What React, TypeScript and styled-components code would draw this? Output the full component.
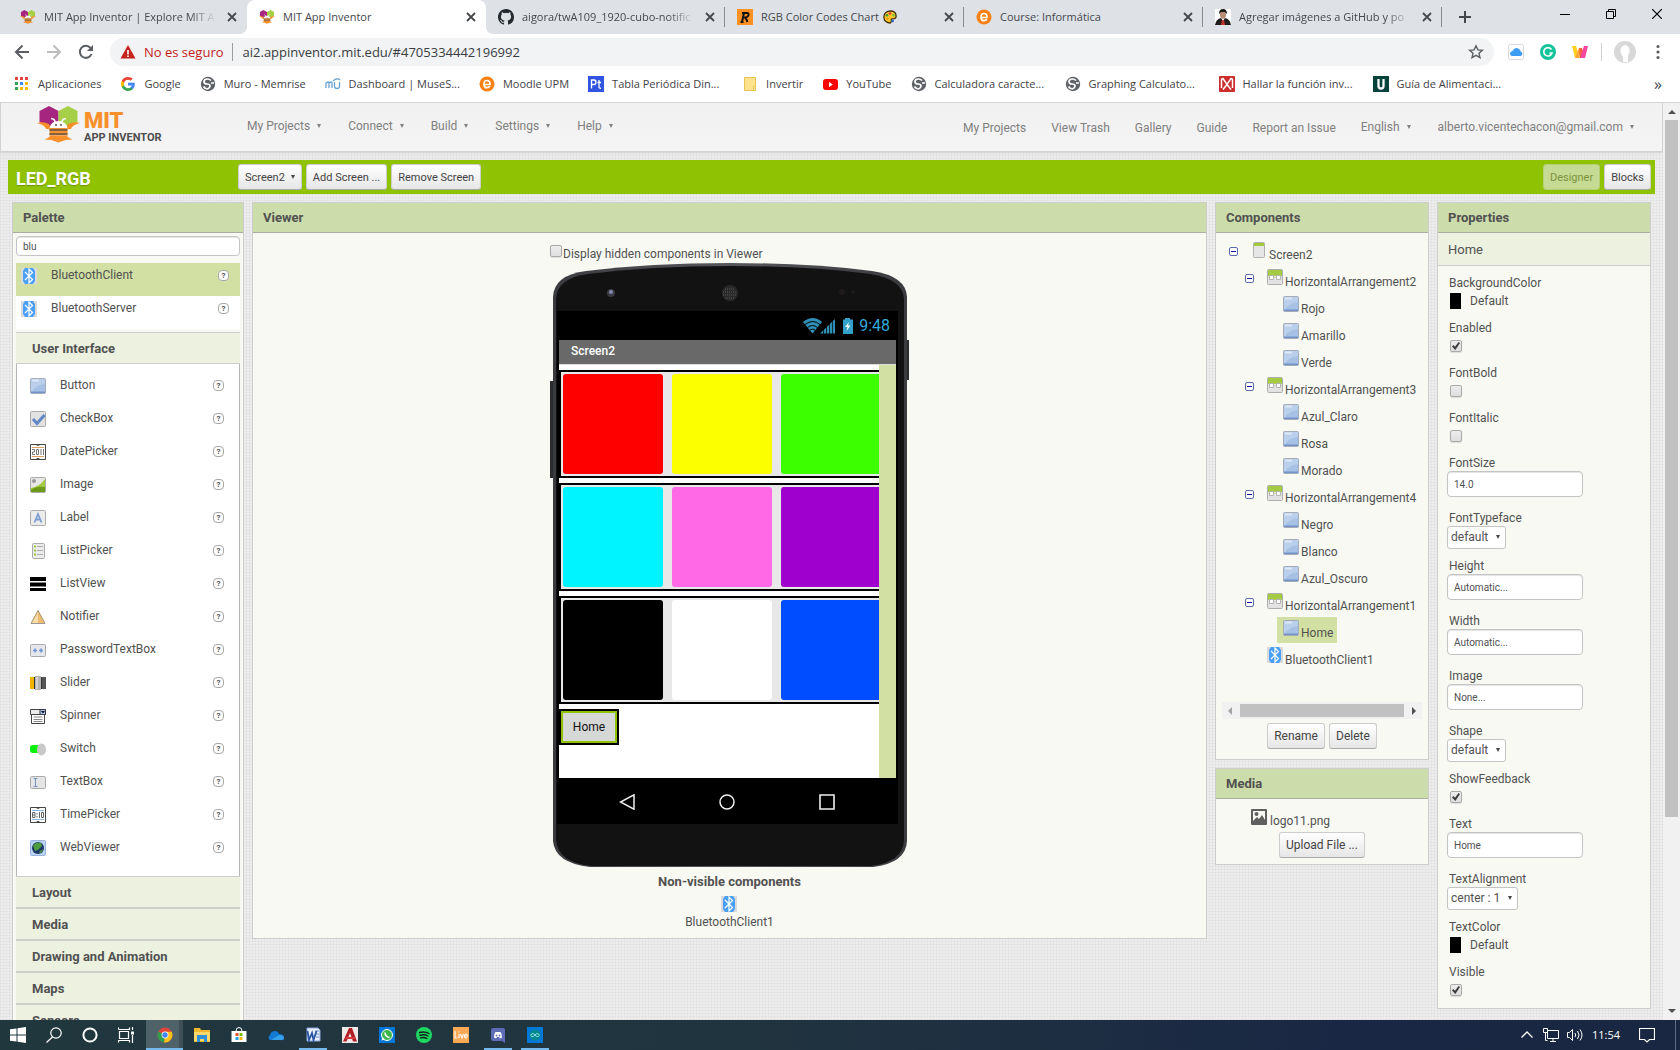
import React from "react";
import styled, { createGlobalStyle, css } from "styled-components";

const Global = createGlobalStyle`
  *, *::before, *::after { box-sizing: border-box; }
  body { margin: 0; font-family: Roboto, "Liberation Sans", sans-serif; font-size: 12px; color: #515151; overflow: hidden; }
  button, input, select { font-family: inherit; font-size: inherit; color: inherit; margin: 0; }
  a { color: inherit; text-decoration: none; }
  ul { list-style: none; margin: 0; padding: 0; }
  h1, h2, h3 { margin: 0; }
  svg { display: block; flex: none; }
`;

const uiFont = `"Open Sans", "Noto Sans", sans-serif`;
const line = "#cdcdcd";

/* ---------- icons ---------- */

const Svg = ({ w = 16, h = 16, box, children }: { w?: number; h?: number; box?: string; children: React.ReactNode }) => (
  <svg width={w} height={h} viewBox={box || `0 0 ${w} ${h}`} aria-hidden="true">{children}</svg>
);

const Bee = () => (
  <>
    <path d="M12 0l9.500 5v11l-9.500 5-9.500-5V5z" fill="#a5257f" />
    <path d="M31 0l9.500 5v11L31 21l-9.500-5V5z" fill="#a5cf47" />
    <path d="M0 17q6-2 12 1l2 5H9Q8 19 0 17zM43 17q-6-2-12 1l-2 5h5q1-4 9-6z" fill="#f7902a" />
    <path d="M12.500 22.500q1-7.500 9-7.500t9 7.500z" fill="#fff" />
    <path d="M18 16q0-3-4-3.500M25 16q0-3 4-3.500" stroke="#fff" strokeWidth="1.600" fill="none" />
    <circle cx="19" cy="19" r=".9" fill="#444" /><circle cx="24" cy="19" r=".9" fill="#444" />
    <path d="M12.500 22h18v7.500h-18z" fill="#f7902a" />
    <path d="M12.500 24h18M12.500 28h18" stroke="#5a5351" strokeWidth="1.600" />
    <path d="M12.500 29.500h18v1.500l5 2.500-7 .5-7 2.500-7-2.500-7-.5 5-2.500z" fill="#f7902a" />
  </>
);

const icons: Record<string, React.ReactNode> = {
  mit: <Svg box="0 -2 43 41"><Bee /></Svg>,
  github: <Svg><path fill="#24292e" d="M8 0C3.580 0 0 3.580 0 8c0 3.540 2.290 6.530 5.470 7.590.4.070.55-.17.55-.38v-1.490c-2.010.37-2.530-.49-2.690-.94-.09-.23-.48-.94-.82-1.130-.28-.15-.68-.52-.01-.53.63-.01 1.080.58 1.230.82.72 1.210 1.870.87 2.330.66.07-.52.28-.87.51-1.070-1.780-.2-3.640-.89-3.640-3.950 0-.87.31-1.590.82-2.150-.08-.2-.36-1.020.08-2.120 0 0 .67-.21 2.200.82a7.600 7.600 0 0 1 4 0c1.530-1.040 2.200-.82 2.200-.82.44 1.100.16 1.920.08 2.120.51.56.82 1.270.82 2.150 0 3.070-1.870 3.750-3.650 3.950.29.25.54.73.54 1.480v2.200c0 .21.15.46.55.38A8 8 0 0 0 16 8c0-4.420-3.580-8-8-8z" /></Svg>,
  rgb: <Svg><path fill="#ff9124" d="M0 0h16v16H0z" /><path d="M5 13L7 4h3q2 0 1.500 2T9 8.500H6.500M8.500 8.500L10.500 13M3.500 13h3M5 4h4" fill="none" stroke="#111" strokeWidth="2" /></Svg>,
  moodle: <Svg><circle cx="8" cy="8" r="7.500" fill="#f98012" /><path d="M5 8.500h6q.2-4-3-4t-3 3.700q0 3.500 3 3.500 2 0 2.800-1.500" fill="none" stroke="#fff" strokeWidth="1.700" /></Svg>,
  person: <Svg><path fill="#fff" d="M0 0h16v16H0z" /><path d="M5 3q3-4 6 0v4l-1 2-2 1-2-1-1-2z" fill="#b98d72" /><path d="M4 5q0-5 4-5t4 5l-2-2H6z" fill="#191919" /><path d="M0 16q1-6 6-7l2 3 2-3q5 1 6 7z" fill="#211c1c" /><path d="M7 11h2l1 5H6z" fill="#c2352f" /></Svg>,
  palette: <Svg w={14} h={14} box="0 0 16 16"><path d="M8 1q7 0 7 6 0 3-4 3-2 0-1.500 2T8 15Q1 14 1 8t7-7z" fill="#ffc32b" stroke="#3a2a05" strokeWidth="1.400" /><circle cx="4.500" cy="6" r="1.500" fill="#3aa13c" /><circle cx="8" cy="4" r="1.500" fill="#d33" /><circle cx="12" cy="6" r="1.500" fill="#7c3" /><circle cx="5" cy="10" r="1.500" fill="#e8a000" /><circle cx="11" cy="12.500" r="1.600" fill="#36c" /></Svg>,
  apps: <Svg>{["#e8423f", "#e8423f", "#e8423f", "#36a35b", "#4086f4", "#f7b90a", "#36a35b", "#f7b90a", "#f7b90a"].map((c, i) => <path key={i} fill={c} d={`M${1 + (i % 3) * 5} ${1 + Math.floor(i / 3) * 5}h3v3h-3z`} />)}</Svg>,
  google: <Svg w={14} h={14} box="0 0 48 48"><path fill="#4285f4" d="M47 24.500c0-1.600-.2-3.200-.4-4.500H24v9h13c-.6 3-2.300 5.400-4.800 7v6h7.700c4.500-4 7.100-10.200 7.100-17.500z" /><path fill="#34a853" d="M24 48c6.500 0 12-2.100 15.900-5.900l-7.700-6c-2.200 1.500-4.900 2.300-8.200 2.300-6.300 0-11.600-4.200-13.500-10H2.600v6.200C6.500 42.600 14.600 48 24 48z" /><path fill="#fbbc05" d="M10.500 28.500a14.500 14.500 0 0 1 0-9.100v-6.200H2.600a24 24 0 0 0 0 21.500z" /><path fill="#ea4335" d="M24 9.500c3.500 0 6.700 1.200 9.200 3.600L40 6.200C36 2.400 30.500 0 24 0 14.600 0 6.500 5.400 2.600 13.200l7.900 6.200c1.900-5.700 7.200-9.900 13.500-9.900z" /></Svg>,
  globe: <Svg><circle cx="8" cy="8" r="7.200" fill="#5f6368" /><path d="M7.500 3Q4 3 4 5.500t3 2.500 3 2-2.500 3M7.500 3q2 0 3.500 1.500M7.500 13Q5 13 3.500 10.500M11 7h3" fill="none" stroke="#fff" strokeWidth="1.700" /></Svg>,
  muse: <Svg><path d="M1 12V7q3-2 3 0v5V7q3-2 3 0v5M9.500 6v4q0 2.500 2.500 2.500t2.500-2.500V6M8 5q4-4 7-1" fill="none" stroke="#6aa3cf" strokeWidth="1.300" /></Svg>,
  pt: <Svg><path d="M0 0h16v16H0z" fill="#3155e0" /><path d="M3.500 12.500V4h2.500q2 0 2 2.200T6 8.500H4M11 4v7q0 1.500 2 1.200M9.500 6.500h3.500" stroke="#fff" strokeWidth="1.300" fill="none" /></Svg>,
  folder: <Svg><path d="M2.500 1.500h11v13h-11z" fill="#ffe38c" stroke="#e9c44f" /><path d="M11.500 10.500h2v4h-2z" fill="#fff0b8" stroke="#e9c44f" /></Svg>,
  youtube: <Svg><rect x="1" y="3" width="15" height="11" rx="3" fill="#f00" /><path d="M7 6l4 2.500L7 11z" fill="#fff" /></Svg>,
  hallar: <Svg><rect width="16" height="16" rx="1" fill="#cc2e2e" /><path d="M2.500 12V4q0-1.500 1.500-1.500l4 6 4-6q1.500 0 1.500 1.500v8M4 13.500l4-5 4 5" fill="none" stroke="#fff" strokeWidth="1.500" /></Svg>,
  uned: <Svg><path d="M0 0h16v16H0z" fill="#04423a" /><path d="M5.500 3v7q0 2.500 2.500 2.500t2.500-2.500V3" fill="none" stroke="#fff" strokeWidth="2.300" /></Svg>,
  bluetooth: <Svg><path d="M0 0h16v16H0z" fill="#dbdbdb" /><path d="M4 0h8l2 3v10l-2 3H4l-2-3V3z" fill="#4aa0f8" /><path d="M4 4l7.500 7.500L8 15V1l3.500 3.500L4 12" fill="none" stroke="#fff" strokeWidth="1.200" /></Svg>,
  button: <Svg><rect x=".5" y=".5" width="15" height="15" rx="1" fill="#a7c1e4" stroke="#a5acb8" /><path d="M1 1h14v5Q5 7 2 14H1z" fill="#b9cfeb" /><path d="M2 1.500h7v2H2z" fill="#dce8f7" /><path d="M1 13.500h14v1.500H1z" fill="#7292cb" /></Svg>,
  checkbox: <Svg><rect x=".5" y=".5" width="15" height="15" rx="1" fill="#e2e2e2" stroke="#aaa" /><path d="M3 8l4 4.500L14.500 4" fill="none" stroke="#5f86c5" strokeWidth="3" /></Svg>,
  date: <Svg><path d="M.5.5h15v15H.5z" fill="#fff" stroke="#444" /><path d="M2 3.500h12M2 12.500h12" stroke="#e0a064" /><path d="M2 5.500h2.500V8H2.500v2.500h2.500M6.500 5.500h2v5h-2zM11 5v6M13.500 5v6" fill="none" stroke="#777" /><path d="M6 2h4L8 1zM6 14h4l-2 1.500z" fill="#444" /></Svg>,
  image: <Svg><rect x=".5" y=".5" width="15" height="15" rx="1" fill="#e8e8e8" stroke="#aaa" /><path d="M1 11q8-1 14-9v13H1z" fill="#a3cc3f" /><path d="M1 13q5-4 14-3v5H1z" fill="#6d9a17" /><circle cx="4" cy="4" r="2" fill="#999" /></Svg>,
  label: <Svg><rect x=".5" y=".5" width="15" height="15" rx="1" fill="#ececec" stroke="#aaa" /><path d="M4.500 12.500L8 4l3.500 8.500M5.500 9.500h5" fill="none" stroke="#7f9fd2" strokeWidth="1.800" /></Svg>,
  list: <Svg><rect x="2.500" y=".5" width="12" height="15" rx="1" fill="#ececec" stroke="#aaa" /><path d="M7 3.500h6M7 7.500h6M7 11.500h6" stroke="#aaa" /><path d="M4 3.500h2M4 7.500h2M4 11.500h2" stroke="#9cc63c" strokeWidth="2" /></Svg>,
  listview: <Svg><path d="M0 1h16v4H0zM0 6.500h16v4H0zM0 12h16v3H0z" fill="#000" /></Svg>,
  notifier: <Svg><path d="M8 1.500L15 14.500H1z" fill="#f0bd6e" stroke="#a89274" /><path d="M8 3v11H2z" fill="#f8dba8" /><path d="M1 14.500h14" stroke="#999" /></Svg>,
  password: <Svg><rect x=".5" y="2.500" width="15" height="12" rx="1" fill="#e5e7ea" stroke="#aaa" /><path d="M3 8.500h4M5 6.500v4M9 8.500h4M11 6.500v4" stroke="#7196d4" strokeWidth="1.600" /></Svg>,
  slider: <Svg><path d="M0 2h5v12H0z" fill="#f3b200" /><path d="M11 2h5v12h-5z" fill="#555" /><path d="M5 1h6v14H5z" fill="#b4b4b4" /><path d="M4.500 2v12M11.500 2v12" stroke="#333" /><path d="M7 2v12" stroke="#ddd" strokeWidth="1.500" /></Svg>,
  spinner: <Svg><path d="M.5 1.500h15v5H.5z" fill="#ececec" stroke="#444" /><path d="M10 1.500h5.500v5H10z" fill="#a9c4f4" stroke="#334" /><path d="M11 3h4l-2 2.500z" fill="#111" /><path d="M1.500 6.500h13v9h-13z" fill="#fff" stroke="#444" /><path d="M3.500 9h9M3.500 11.500h9M3.500 13.500h9" stroke="#888" /></Svg>,
  switch: <Svg><rect x="0" y="4" width="13" height="8" rx="3" fill="#0af00e" /><ellipse cx="11.500" cy="8.500" rx="4.500" ry="6" fill="#c8c8c8" /></Svg>,
  textbox: <Svg><rect x=".5" y="2.500" width="15" height="12" rx="1" fill="#e5e5e5" stroke="#aaa" /><path d="M3.500 4.500h4M3.500 12.500h4M5.500 4.500v8" stroke="#7891bb" /></Svg>,
  time: <Svg><path d="M.5.5h15v15H.5z" fill="#fff" stroke="#444" /><path d="M2 3.500h12M2 12.500h12" stroke="#8bb6e0" /><path d="M2.500 5.500h2.500v5H2.500zM2.500 8h2.500M7 6v1.500M7 9v1.500M9.500 5v6M11.500 5.500h2v5h-2z" fill="none" stroke="#666" /><path d="M6 2h4L8 1zM6 14h4l-2 1.500z" fill="#444" /></Svg>,
  web: <Svg><rect x=".5" y=".5" width="15" height="15" rx="1" fill="#bcd3f0" stroke="#98b5e0" /><circle cx="8" cy="8" r="6" fill="#1c3768" /><path d="M3 6q3-5 8-3l1 3-4 4-3 1z" fill="#4f9c3d" /><path d="M9 12l4-3-1 3-2 1z" fill="#4f9c3d" /></Svg>,
  screen: <Svg><rect x="2.500" y=".5" width="11" height="15" rx="1" fill="#e6e6e6" stroke="#b0b0b0" /><path d="M3 1h10v3H3z" fill="#a4c93a" /></Svg>,
  arrangement: <Svg><rect x=".5" y=".5" width="15" height="15" rx="1" fill="#e2e2e2" stroke="#aeaeae" /><path d="M1 1h14v6H1z" fill="#a4cb42" /><path d="M2.500 6.500h4v4h-4zM9.500 6.500h4v4h-4z" fill="#fff" stroke="#b4b4b4" /></Svg>,
  picture: <Svg><rect width="16" height="16" rx="1" fill="#5f5f5f" /><path d="M2 2h12v9l-3-5-3 4-2-2-4 4z" fill="#f8f9f3" /><circle cx="5.500" cy="5" r="2" fill="#5f5f5f" /></Svg>,
  back: <Svg><path d="M15 8H2M8.500 1.500L2 8l6.500 6.500" fill="none" stroke="#5a5d61" strokeWidth="2" /></Svg>,
  forward: <Svg><path d="M1 8h13M7.500 1.500L14 8l-6.500 6.500" fill="none" stroke="#bcbdbf" strokeWidth="2" /></Svg>,
  reload: <Svg><path d="M13.500 10a6 6 0 1 1-1-6" fill="none" stroke="#5a5d61" strokeWidth="2" /><path d="M15 1v6H9z" fill="#5a5d61" /></Svg>,
  warning: <Svg><path d="M8 1l7.500 13.500H.5z" fill="#c5221f" /><path d="M8 6v4.500M8 11.500v1.500" stroke="#fff" strokeWidth="1.600" /></Svg>,
  star: <Svg><path d="M8 1.800l1.900 4.100 4.400.4-3.300 3 1 4.400L8 11.400l-4 2.300 1-4.400-3.300-3 4.400-.4z" fill="none" stroke="#5a5d61" strokeWidth="1.400" /></Svg>,
  cloud: <Svg><rect x=".5" y=".5" width="15" height="15" rx="2" fill="#fff" stroke="#d5dae0" /><path d="M4 12q-3-1-1.500-4 1.500-1 2-1Q7 2 11 5q2 1 1.500 2.500Q16 9 13 12z" fill="#3d9df6" /></Svg>,
  grammarly: <Svg><circle cx="8" cy="8" r="8" fill="#15c39a" /><path d="M11.500 5.500A4.200 4.200 0 1 0 12 9H9.500" fill="none" stroke="#fff" strokeWidth="1.600" /></Svg>,
  wallapop: <Svg><path d="M0 2h4l4 12H3z" fill="#ffcf24" /><path d="M7 4h3L7 14H3z" fill="#ffa53a" /><path d="M7 4h3l3 10H8z" fill="#f9613f" /><path d="M12 2h4l-3 12H8z" fill="#f4479d" /></Svg>,
  avatar: <Svg w={22} h={22}><circle cx="11" cy="11" r="11" fill="#d8d8d8" /><ellipse cx="11" cy="10" rx="4.500" ry="6" fill="#fff" /><path d="M9 14h5v7H9z" fill="#fff" /></Svg>,
  dots: <Svg><path d="M8 2.500v0M8 8v0M8 13.500v0" stroke="#5a5d61" strokeWidth="3.200" strokeLinecap="round" /></Svg>,
  close: <Svg><path d="M4 4l8 8M12 4l-8 8" stroke="#45484b" strokeWidth="1.800" /></Svg>,
  plus: <Svg><path d="M8 2v12M2 8h12" stroke="#45484b" strokeWidth="2" /></Svg>,
  min: <Svg w={10} h={10}><path d="M0 5.500h10" stroke="#000" /></Svg>,
  restore: <Svg w={10} h={10}><path d="M.5 2.500h7v7h-7zM2.500 2.500v-2h7v7h-2" fill="none" stroke="#000" /></Svg>,
  winclose: <Svg w={10} h={10}><path d="M0 0l10 10M10 0L0 10" stroke="#000" strokeWidth="1.200" /></Svg>,
  windows: <Svg><path d="M0 2.300L6.500 1.400v6.100H0zM7.500 1.200L16 0v7.500H7.500zM0 8.500h6.500v6.100L0 13.700zM7.500 8.500H16V16l-8.500-1.200z" fill="#fff" /></Svg>,
  search: <Svg><circle cx="10" cy="6" r="5.200" fill="none" stroke="#fff" strokeWidth="1.200" /><path d="M6.500 10L.5 15.500" stroke="#fff" strokeWidth="1.200" /></Svg>,
  cortana: <Svg><circle cx="8" cy="8" r="6.600" fill="none" stroke="#fff" strokeWidth="2" /></Svg>,
  taskview: <Svg><path d="M1.500 4.500h9v7h-9zM.5 2.500v-2M.5 2.500h11v-2M.5 15.500v-2h11v2M14.500 0v3M14.500 8v8" fill="none" stroke="#fff" strokeWidth="1.200" /><path d="M13 4.500h3v3h-3z" fill="#fff" /></Svg>,
  chrome: <Svg><circle cx="8" cy="8" r="7.500" fill="#e0443a" /><path d="M8 8L1.300 4.500A7.500 7.500 0 0 0 7.500 15.500z" fill="#2f9e4e" /><path d="M8 8l-.8 7.500A7.500 7.500 0 0 0 14.700 4.800H8z" fill="#fbc116" /><circle cx="8" cy="8" r="3.400" fill="#fff" /><circle cx="8" cy="8" r="2.700" fill="#4285f4" /></Svg>,
  explorer: <Svg><path d="M0 1h6l1 2h9v12H0z" fill="#f1b82d" /><path d="M0 5h16v9H0z" fill="#ffd869" /><path d="M3 8h10v7h-3v-3H6v3H3z" fill="#2f8fd8" /></Svg>,
  store: <Svg><path d="M.5 4h15v11H.5z" fill="#fff" /><path d="M5 4q0-3.500 3-3.500T11 4" fill="none" stroke="#fff" /><path d="M4.500 6h3v3h-3z" fill="#e5502c" /><path d="M8.500 6h3v3h-3z" fill="#7cb813" /><path d="M4.500 10h3v3h-3z" fill="#20a1e8" /><path d="M8.500 10h3v3h-3z" fill="#fbb813" /></Svg>,
  onedrive: <Svg><path d="M2 13q-3-2 0-5 1-4 5-4 3 0 4 3 5 0 5 3.500T13 13z" fill="#1479d0" /><path d="M3 13l8-5q5 0 5 2.500T13 13z" fill="#35a1ea" /></Svg>,
  word: <Svg><path d="M2 1h11l2 2v11H2z" fill="#e8effa" stroke="#8ba7d8" /><path d="M10 4h4M11 7h3M11 10h3" stroke="#6d8fce" /><path d="M2.500 4l1.500 9L7 6l1.500 7 3-9" fill="none" stroke="#2c56a4" strokeWidth="1.800" /></Svg>,
  autocad: <Svg><path d="M0 0h16v16H0z" fill="#f1e9e8" /><path d="M1 14.500L7 1h3l5 13.500h-4L8 6l-3.500 8.500z" fill="#b11f26" /><path d="M4 10h9l1 2H3z" fill="#d5383a" /></Svg>,
  whatsapp: <Svg><path d="M0 0h16v16H0z" fill="#0078d7" /><circle cx="8" cy="8" r="5.500" fill="#3db54a" stroke="#fff" /><path d="M2.500 13.500l1-3.500 2.500 2.500z" fill="#fff" /><path d="M6 5.500q0 4 4.500 5" fill="none" stroke="#fff" strokeWidth="1.600" /></Svg>,
  spotify: <Svg><circle cx="8" cy="8" r="8" fill="#1ed760" /><path d="M3.500 5.500q5-1.500 9.500 1M4 8.200q4.500-1.200 8 .8M4.500 10.800q3.500-1 6.500.7" fill="none" stroke="#121f18" strokeWidth="1.400" strokeLinecap="round" /></Svg>,
  live: <Svg><path d="M0 0h16v16H0z" fill="#fda855" /><path d="M2 4v7h2.500M6 7v4M6 4.500v1M7.500 7L9 11l1.500-4M11.500 9h3q0-2-1.500-2t-1.500 2 1.500 2h1" fill="none" stroke="#fff" strokeWidth="1.100" /></Svg>,
  discord: <Svg><path d="M3 1h10q2 0 2 2v13l-3-2H3q-2 0-2-2V3q0-2 2-2z" fill="#5d6cb5" /><path d="M4 10.500q0-4 1.500-5.500h5Q12 6.500 12 10.500L10 11.500 9 10H7l-1 1.500z" fill="#fff" /><circle cx="6.500" cy="8.500" r=".9" fill="#5d6cb5" /><circle cx="9.500" cy="8.500" r=".9" fill="#5d6cb5" /></Svg>,
  arduino: <Svg><path d="M0 0h16v16H0z" fill="#0078d7" /><circle cx="8" cy="8" r="5.500" fill="#04878f" /><path d="M8 8q-2-2.500-3.500-1t0 2.500T8 8q2-2.500 3.500-1t0 2.500T8 8" fill="none" stroke="#8fe0e0" /></Svg>,
  chevron: <Svg><path d="M2.500 10.500L8 5l5.500 5.500" fill="none" stroke="#fff" strokeWidth="1.300" /></Svg>,
  network: <Svg><path d="M4.500 3.500h11v8h-11zM10 11.500v3M7 14.500h6M.5 1.500h4v4h-4zM2.500 5.500v8h2" fill="none" stroke="#fff" /></Svg>,
  speaker: <Svg><path d="M.5 5.500h2l3-3v11l-3-3h-2z" fill="none" stroke="#fff" /><path d="M8 6q1.500 2 0 4M10.500 4q3 4 0 8M13 2.500q4 5.500 0 11" fill="none" stroke="#fff" /></Svg>,
  note: <Svg><path d="M.5 1.500h15v11h-5L8 15l-2.500-2.500h-5z" fill="none" stroke="#fff" strokeWidth="1.200" /></Svg>,
};

/* ---------- browser chrome ---------- */

const Shell = styled.div`display: flex; flex-direction: column; height: 100vh; background: #fff;`;

const TabStrip = styled.div`
  flex: none; display: flex; height: 34px; padding-left: 8px; background: #dee1e6;
  font: 11px/16px ${uiFont}; color: #45484c;
`;
const Tab = styled.div<{ $active?: boolean; $sep?: boolean }>`
  flex: 0 1 239px; min-width: 0; display: flex; align-items: center; gap: 8px; padding: 0 7px 0 12px; position: relative;
  ${p => p.$active && css`
    background: #fff; border-radius: 8px 8px 0 0;
    &::before, &::after { content: ""; position: absolute; bottom: 0; width: 8px; height: 8px; }
    &::before { left: -8px; background: radial-gradient(circle at 0 0, transparent 8px, #fff 8px); }
    &::after { right: -8px; background: radial-gradient(circle at 100% 0, transparent 8px, #fff 8px); }
  `}
  ${p => p.$sep && css`background: linear-gradient(#888b90, #888b90) right center / 1px 20px no-repeat;`}
`;
const TabTitle = styled.span<{ $fade?: boolean }>`
  flex: 1; min-width: 0; display: flex; align-items: center; gap: 4px; white-space: nowrap;
  ${p => p.$fade && css`mask-image: linear-gradient(90deg, #000 85%, transparent);`}
`;
const IconButton = styled.button`
  border: 0; padding: 0; background: none; display: flex; align-items: center; justify-content: center;
`;
const NewTab = styled(IconButton)`width: 45px;`;
const WindowButtons = styled.div`margin-left: auto; display: flex; height: 28px;`;
const WindowButton = styled(IconButton)`width: 46px;`;

const Toolbar = styled.div`
  flex: none; display: flex; align-items: center; height: 36px; padding: 0 14px; gap: 16px;
  font: 13px/18px ${uiFont};
`;
const Omnibox = styled.div`
  flex: 1; display: flex; align-items: center; height: 28px; margin-right: -2px; padding: 0 10px;
  border-radius: 14px; background: #f1f3f4; gap: 8px;
`;
const Insecure = styled.span`color: #c5221f; padding-right: 8px; margin-right: 2px; border-right: 1px solid #9a9da1;`;
const Url = styled.input`
  flex: 1; border: 0; padding: 0; background: none; outline: 0; color: #3a3d41;
`;
const AvatarButton = styled(IconButton)`
  height: 18px; border-left: 1px solid #cfd1d4; padding-left: 12px; margin: 0 -2px 0 -3px;
`;

const Bookmarks = styled.nav`
  flex: none; display: flex; align-items: center; height: 33px; padding: 0 14px 4px; gap: 19px;
  border-bottom: 1px solid #d3d4d6; font: 11px/16px ${uiFont}; color: #3f4246; white-space: nowrap;
`;
const Bookmark = styled.a<{ $long: boolean }>`
  display: flex; align-items: center; gap: 8px; min-width: ${p => (p.$long ? "135px" : "0")};
`;
const BookmarkIcon = styled.span`width: 16px; display: flex; justify-content: center;`;
const More = styled(IconButton)`margin-left: auto; width: 16px; font-size: 16px; color: #45484c;`;

/* ---------- page ---------- */

const Page = styled.div`
  flex: 1; min-height: 0; display: flex; overflow: hidden;
`;
const Content = styled.div`
  flex: 1; min-width: 0; overflow: hidden;
  background-color: #ededed;
  background-image:
    repeating-linear-gradient(0deg, rgba(0,0,0,.03) 0 1px, transparent 1px 3px),
    repeating-linear-gradient(90deg, rgba(0,0,0,.03) 0 1px, transparent 1px 3px);
`;
const Header = styled.header`
  display: flex; align-items: center; height: 49px; padding: 0 26px 0 36px;
  background: linear-gradient(#f1f1f1, #f4f4f4); border: solid #d2d2d2; border-width: 0 1px 1px; color: #808080;
  box-shadow: 0 1px 2px #d5d5d5;
`;
const Brand = styled.a`display: flex; align-items: flex-start; width: 210px; height: 42px; gap: 4px;`;
const BrandText = styled.span`display: flex; flex-direction: column; font-weight: 700; color: #4d4d4d; font-size: 11px; line-height: 12px; padding-top: 4px;`;
const BrandName = styled.span`color: #f7902a; font-size: 22px; font-weight: 900; line-height: 22px;`;
const Menu = styled.nav<{ $right?: boolean }>`
  display: flex; align-items: center; gap: ${p => (p.$right ? 25 : 27)}px; line-height: 16px; padding-top: ${p => (p.$right ? 1 : 0)}px;
  margin-left: ${p => (p.$right ? "auto" : "0")};
`;
const MenuButton = styled.button`
  border: 0; padding: 0 0 2px; background: none; display: flex; align-items: center; gap: 7px;
  ${Menu} a ~ & { padding-right: 2px; }
`;
const Caret = styled.span`border: 2px solid transparent; border-top: 4px solid currentColor; border-bottom: 0;`;

const ProjectBar = styled.div`
  display: flex; align-items: center; height: 34px; margin: 8px 8px 0; padding: 0 4px 0 8px; gap: 4px; background: #8fc202;
`;
const ProjectName = styled.h1`
  width: 218px; font-size: 18px; line-height: 24px; padding-top: 4px; color: #fff; text-shadow: 0 1px 1px #6d9500;
`;
const Btn = styled.button<{ $small?: boolean }>`
  display: flex; align-items: center; gap: 6px; height: 26px; padding: 0 6px; white-space: nowrap;
  font-size: ${p => (p.$small ? 11 : 12)}px;
  border: 1px solid #ccc; border-bottom-color: #aaa; border-radius: 3px; color: #444;
  background: linear-gradient(#fff, #e6e6e6);
  &:disabled { background: #c5da93; border-color: #b3cf70; color: #7c9440; }
`;
const Spacer = styled.span`flex: 1;`;

const Workspace = styled.main`
  display: grid; grid-template-columns: 232px minmax(0, 1fr) 214px 214px; gap: 8px; align-items: start; padding: 8px 12px;
`;
const Column = styled.div`display: flex; flex-direction: column; gap: 8px;`;
const Panel = styled.section`border: 1px solid ${line}; background: #f8f9f3;`;
const PanelTitle = styled.h2`
  height: 30px; padding: 0 10px; border-bottom: 1px solid #aaaea2; background: #ccdcaa;
  font-size: 13px; line-height: 29px;
`;

/* palette */
const PaletteBody = styled.div`padding: 3px;`;
const TextField = styled.input<{ $h?: number }>`
  display: block; width: 100%; height: ${p => p.$h || 26}px; padding: 0 6px; font-size: 10px;
  border: 1px solid #c4c4c4; border-radius: 4px; background: #fff; box-shadow: inset 0 1px 1px #e4e4e4; outline: 0;
`;
const Results = styled.ul`margin: 7px 0 3px; background: #fff;`;
const Entry = styled.li<{ $selected?: boolean; $pad: number; $end: number }>`
  display: flex; align-items: flex-start; height: 33px; padding: 5px ${p => p.$end}px 0 ${p => p.$pad}px;
  background: ${p => (p.$selected ? "#d2e0a3" : "#fff")};
`;
const EntryName = styled.span`flex: 1; padding-left: 14px; line-height: 14px;`;
const Help = styled.button`
  width: 11px; height: 11px; margin-top: 2px; padding: 0; border: 1px solid #a8a8a8; border-radius: 4px; background: #fff;
  font-size: 8px; font-weight: 700; line-height: 9px; text-align: center;
`;
const Category = styled.button`
  display: block; width: 100%; height: 32px; padding: 2px 16px 0; text-align: left; font-size: 13px; font-weight: 700;
  line-height: 28px; border: solid ${line}; border-width: 1px 0; background: #edf1e0;
`;
const CategoryItems = styled.ul`border: solid #b4b4b4; border-width: 0 1px; padding: 9px 0 8px; background: #fff;`;

/* viewer */
const Stage = styled.div`display: flex; flex-direction: column; align-items: center; padding: 12px 0 8px;`;
const HiddenRow = styled.label`display: flex; align-items: flex-start; gap: 1px; width: 359px; height: 18px; line-height: 18px;`;
const Check = styled.input.attrs({ type: "checkbox" })`
  appearance: none; flex: none; width: 12px; height: 12px; border: 1px solid #a9a9a9; border-radius: 2px;
  background: linear-gradient(#ededed, #dedede); box-shadow: 0 1px 1px #ddd;
  &:checked::after {
    content: ""; display: block; width: 8px; height: 8px; margin: 1px; background: #3c3c3c;
    clip-path: polygon(0 55%, 18% 38%, 38% 58%, 82% 0, 100% 14%, 42% 100%);
  }
`;
const Phone = styled.div`position: relative; width: 359px; padding: 48px 11px 43px 7px;`;
const Case = styled.div`position: absolute; inset: 0; z-index: 0;`;
const Display = styled.div`position: relative; background: #000; padding: 0 2px;`;
const StatusBar = styled.div`
  display: flex; align-items: center; justify-content: flex-end; height: 29px; padding-right: 6px; gap: 6px;
  color: #33a9d9; font-size: 16px; line-height: 20px;
`;
const ScreenTitle = styled.div`
  height: 25px; padding: 0 12px; border-bottom: 1px solid #ddd; background: #696969; color: #fff; font-weight: 500; line-height: 22px;
`;
const ScreenBody = styled.div`display: flex; height: 413px; background: #d2e0a3;`;
const Canvas = styled.div`width: 320px; overflow: hidden; padding-top: 5px; background: #fff; display: flex; flex-direction: column; gap: 5px; align-items: flex-start;`;
const Arrangement = styled.div`
  flex: none; display: flex; gap: 9px; width: 334px; border: 2px solid #000; padding: 2px; background: #e8e8e8;
`;
const Swatch = styled.button<{ $c: string }>`
  flex: none; width: 100px; height: 100px; padding: 0; border: 0; border-radius: 3px; background: ${p => p.$c};
`;
const HomeButton = styled.button`
  height: 36px; width: 60px; padding: 0; border: 2px solid #000; background: #d6d7d7; color: #111;
  box-shadow: inset 0 0 0 2px #8fc202;
`;
const NavBar = styled.div`
  display: flex; justify-content: space-between; align-items: center; height: 46px; padding: 2px 61px 0 60px;
`;
const NonVisible = styled.div`display: flex; flex-direction: column; align-items: center; line-height: 16px; padding-top: 7px; gap: 2px;`;
const NonVisibleTitle = styled.h3`font-size: 13px; line-height: 16px; margin-bottom: 4px;`;

/* components tree */
const Tree = styled.ul`padding: 5px 0 0; height: 469px; overflow: hidden;`;
const Node = styled.li<{ $level: number; $leaf?: boolean }>`
  display: flex; align-items: center; height: 27px; padding-left: ${p => (p.$leaf ? 45 : [13, 29, 61][p.$level])}px;
`;
const Toggle = styled.button`
  width: 9px; height: 9px; margin-right: 7px; padding: 0; border: 1px solid #5a6cae; border-radius: 2px; background: #fff;
  &::after { content: ""; display: block; width: 5px; height: 1px; margin: 0 1px; background: #1010b0; }
`;
const NodeLabel = styled.span<{ $selected?: boolean }>`
  display: flex; align-items: flex-start; gap: 2px; height: 26px; padding: 3px 4px 0 6px; white-space: nowrap;
  background: ${p => (p.$selected ? "#d2e0a3" : "none")};
`;
const NodeText = styled.span`line-height: 16px; padding-top: 5px;`;
const HScroll = styled.div`
  display: flex; align-items: center; justify-content: space-between; height: 17px; margin: 0 6px; padding: 0 6px; background: #f1f1f1;
`;
const HThumb = styled.span`width: 164px; height: 13px; background: #c1c1c1;`;
const Tri = styled.span<{ $dir: "left" | "right" | "up" | "down"; $c?: string }>`
  border: 4px solid transparent;
  ${p => p.$dir === "left" && css`border-right-color: ${p.$c || "#505050"}; border-left: 0;`}
  ${p => p.$dir === "right" && css`border-left-color: ${p.$c || "#505050"}; border-right: 0;`}
  ${p => p.$dir === "up" && css`border-bottom-color: #505050; border-top: 0;`}
  ${p => p.$dir === "down" && css`border-top-color: #505050; border-bottom: 0;`}
`;
const Actions = styled.div`display: flex; justify-content: center; gap: 4px; padding: 4px 0 10px;`;
const MediaBody = styled.div`padding: 10px 0 6px;`;
const MediaItem = styled.a`display: flex; gap: 3px; padding-left: 35px; height: 23px;`;
const MediaName = styled.span`line-height: 16px; padding-top: 4px;`;
const MediaActions = styled.div`display: flex; justify-content: center;`;

/* properties */
const Selected = styled.div`height: 33px; padding: 0 10px; border-bottom: 1px solid ${line}; background: #edf1e0; font-size: 13px; line-height: 34px;`;
const Props = styled.div`padding: 8px 9px 0;`;
const Prop = styled.div<{ $h: number }>`height: ${p => p.$h}px;`;
const PropLabel = styled.label`display: block; padding: 1px 0 0 2px; line-height: 16px; height: 17px;`;
const PropCheck = styled.div`padding: 4px 3px;`;
const PropField = styled.div`width: 136px;`;
const SelectWrap = styled.span`
  position: relative; display: inline-block;
  &::after { content: ""; position: absolute; right: 6px; top: 9px; border: 2px solid transparent; border-top: 4px solid #444; border-bottom: 0; pointer-events: none; }
`;
const Select = styled.select`
  appearance: none; display: block; height: 23px; padding: 0 16px 2px 3px; border: 1px solid #c4c4c4; border-radius: 3px; background: #fff; outline: 0;
`;
const ColorButton = styled.button`
  display: flex; align-items: flex-start; gap: 9px; padding: 2px 3px 0; border: 0; background: none; line-height: 16px;
`;
const ColorChip = styled.span`width: 11px; height: 16px; background: #000;`;

const VScroll = styled.div`
  flex: none; width: 17px; display: flex; flex-direction: column; align-items: center; justify-content: space-between;
  padding: 7px 0; background: #f1f1f1;
`;
const VTrack = styled.div`flex: 1; width: 13px; padding: 6px 0 7px;`;
const VThumb = styled.div`height: 79%; background: #c1c1c1;`;

/* taskbar */
const Taskbar = styled.footer`
  flex: none; display: flex; height: 30px; background: linear-gradient(90deg, #21373e, #20343f 45%, #1a2744 80%, #1a2742); color: #fff;
`;
const Tasks = styled.div`display: flex; padding-left: 2px;`;
const Task = styled.button<{ $open?: boolean; $active?: boolean; $sys?: boolean }>`
  width: ${p => (p.$sys ? 36 : 37)}px; padding: 0; border: 0; display: flex; align-items: center; justify-content: center;
  background:
    ${p => (p.$active ? "linear-gradient(#76b9ed, #76b9ed) center bottom / 100% 2px no-repeat," : "")}
    ${p => (p.$open ? "linear-gradient(#76b9ed, #76b9ed) center bottom / 28px 2px no-repeat," : "")}
    ${p => (p.$active ? "linear-gradient(90deg, #4f6269 33px, #3f4f55 33px)" : "none")};
`;
const Tray = styled.div`
  margin-left: auto; display: flex; align-items: center; gap: 8px; padding-right: 4px; font: 12px/16px ${uiFont};
`;
const Clock = styled.time`padding: 0 11px 0 1px; font-size: 11px;`;
const Peek = styled.span`width: 1px; height: 30px; margin-left: 12px; background: #5d6c80;`;

const tabs = [
  { icon: "mit", title: "MIT App Inventor | Explore MIT A", fade: true },
  { icon: "mit", title: "MIT App Inventor", active: true },
  { icon: "github", title: "aigora/twA109_1920-cubo-notific", fade: true, sep: true },
  { icon: "rgb", title: "RGB Color Codes Chart", after: "palette", sep: true },
  { icon: "moodle", title: "Course: Informática", sep: true },
  { icon: "person", title: "Agregar imágenes a GitHub y po", fade: true, sep: true },
];

const bookmarks = [
  ["apps", "Aplicaciones"], ["google", "Google"], ["globe", "Muro - Memrise"], ["muse", "Dashboard | MuseS..."],
  ["moodle", "Moodle UPM"], ["pt", "Tabla Periódica Din..."], ["folder", "Invertir"], ["youtube", "YouTube"],
  ["globe", "Calculadora caracte..."], ["globe", "Graphing Calculato..."], ["hallar", "Hallar la función inv..."], ["uned", "Guía de Alimentaci..."],
];

const palette = [
  ["button", "Button"], ["checkbox", "CheckBox"], ["date", "DatePicker"], ["image", "Image"], ["label", "Label"],
  ["list", "ListPicker"], ["listview", "ListView"], ["notifier", "Notifier"], ["password", "PasswordTextBox"], ["slider", "Slider"],
  ["spinner", "Spinner"], ["switch", "Switch"], ["textbox", "TextBox"], ["time", "TimePicker"], ["web", "WebViewer"],
];

const tree: [number, string, string][] = [
  [0, "screen", "Screen2"],
  [1, "arrangement", "HorizontalArrangement2"], [2, "button", "Rojo"], [2, "button", "Amarillo"], [2, "button", "Verde"],
  [1, "arrangement", "HorizontalArrangement3"], [2, "button", "Azul_Claro"], [2, "button", "Rosa"], [2, "button", "Morado"],
  [1, "arrangement", "HorizontalArrangement4"], [2, "button", "Negro"], [2, "button", "Blanco"], [2, "button", "Azul_Oscuro"],
  [1, "arrangement", "HorizontalArrangement1"], [2, "button", "Home"],
];

const properties: [string, string, string?][] = [
  ["BackgroundColor", "color", "Default"], ["Enabled", "check", "on"], ["FontBold", "check"], ["FontItalic", "check"],
  ["FontSize", "text", "14.0"], ["FontTypeface", "select", "default"], ["Height", "text", "Automatic..."],
  ["Width", "text", "Automatic..."], ["Image", "text", "None..."], ["Shape", "select", "default"], ["ShowFeedback", "check", "on"],
  ["Text", "text", "Home"], ["TextAlignment", "select", "center : 1"], ["TextColor", "color", "Default"], ["Visible", "check", "on"],
];
const propHeight: Record<string, number> = { color: 45, check: 45, text: 55, select: 48 };

const colors = [
  [["Rojo", "#ff0000"], ["Amarillo", "#fbff00"], ["Verde", "#3cff00"]],
  [["Azul claro", "#00f4ff"], ["Rosa", "#ff69e6"], ["Morado", "#a000ce"]],
  [["Negro", "#000000"], ["Blanco", "#ffffff"], ["Azul oscuro", "#004cff"]],
];

const MenuItem = ({ children }: { children: React.ReactNode }) => <MenuButton>{children}<Caret /></MenuButton>;

const PaletteEntry = ({ icon, name, selected, wide }: { icon: string; name: string; selected?: boolean; wide?: boolean }) => (
  <Entry $selected={selected} $pad={wide ? 5 : 13} $end={wide ? 11 : 15}>
    {icons[icon]}<EntryName>{name}</EntryName><Help aria-label={`Help: ${name}`}>?</Help>
  </Entry>
);

const Property = ({ name, kind, value }: { name: string; kind: string; value?: string }) => (
  <Prop $h={propHeight[kind]}>
    <PropLabel htmlFor={name}>{name}</PropLabel>
    {kind === "color" && <ColorButton id={name}><ColorChip />{value}</ColorButton>}
    {kind === "check" && <PropCheck><Check id={name} defaultChecked={value === "on"} /></PropCheck>}
    {kind === "text" && <PropField><TextField id={name} defaultValue={value} /></PropField>}
    {kind === "select" && <SelectWrap><Select id={name}><option>{value}</option></Select></SelectWrap>}
  </Prop>
);

const PhoneCase = () => (
  <Svg w={359} h={604}>
    <defs>
      <linearGradient id="edge" x1="0" x2="1" y1="0" y2="0">
        <stop offset="0" stopColor="#3a3b3e" /><stop offset=".5" stopColor="#55575a" /><stop offset="1" stopColor="#3a3b3e" />
      </linearGradient>
    </defs>
    <path d="M0 118h4v97H0zM355 77h4v40h-4z" fill="#2b2c2e" />
    <path d="M3 34Q4 12 36 8 100 0 180 0t142 8q34 5 35 26v544q-1 22-34 26H40Q5 600 3 578z" fill="url(#edge)" />
    <path d="M6 36Q7 15 38 11 100 3 180 3t140 8q33 5 34 25v541q-1 22-33 26H42Q8 600 6 577z" fill="#121212" />
    <circle cx="61" cy="30" r="4" fill="#3a3a40" /><circle cx="61" cy="29" r="2" fill="#8587b4" />
    <circle cx="180" cy="30" r="8" fill="#292929" />
    <path d="M175 26h10M173 29h14M173 32h14M175 35h10" stroke="#5a5a5a" strokeDasharray="1 1" />
    <circle cx="292" cy="29" r="3" fill="#1e1a1a" /><circle cx="303" cy="29" r="2" fill="#1e1a1a" />
  </Svg>
);

const StatusIcons = () => (
  <Svg w={50} h={16}>
    <path d="M0 4q10-8 19 0L9.500 15.500z" fill="#2f8fb6" />
    <path d="M2 6.500q8-6 15 0M4.500 9.500q5-4 10 0M7 12q3-2 5 0" stroke="#000" fill="none" />
    <path d="M17 15.500L32 1v14.500z" fill="#2f8fb6" /><path d="M20.500 1v15M23.500 1v15M26.500 1v15M29.500 1v15" stroke="#000" strokeWidth=".7" />
    <path d="M42 0h5v1.500h3V16H40V1.500h2z" fill="#33a0cb" /><path d="M46 4l-4 5h2.500l-1 4 4-5.500H45z" fill="#fff" />
  </Svg>
);

export default function App() {
  return (
    <Shell>
      <Global />
      <TabStrip>
        {tabs.map((t, i) => (
          <Tab key={i} $active={t.active} $sep={t.sep}>
            {icons[t.icon]}
            <TabTitle $fade={t.fade}>{t.title}{t.after && icons[t.after]}</TabTitle>
            <IconButton aria-label="Cerrar pestaña">{icons.close}</IconButton>
          </Tab>
        ))}
        <NewTab aria-label="Nueva pestaña">{icons.plus}</NewTab>
        <WindowButtons>
          <WindowButton aria-label="Minimizar">{icons.min}</WindowButton>
          <WindowButton aria-label="Restaurar">{icons.restore}</WindowButton>
          <WindowButton aria-label="Cerrar">{icons.winclose}</WindowButton>
        </WindowButtons>
      </TabStrip>

      <Toolbar>
        <IconButton aria-label="Atrás">{icons.back}</IconButton>
        <IconButton aria-label="Adelante">{icons.forward}</IconButton>
        <IconButton aria-label="Recargar">{icons.reload}</IconButton>
        <Omnibox>
          {icons.warning}
          <Insecure>No es seguro</Insecure>
          <Url aria-label="Dirección" defaultValue="ai2.appinventor.mit.edu/#4705334442196992" />
          <IconButton aria-label="Favorito">{icons.star}</IconButton>
        </Omnibox>
        <IconButton aria-label="iCloud">{icons.cloud}</IconButton>
        <IconButton aria-label="Grammarly">{icons.grammarly}</IconButton>
        <IconButton aria-label="Extensión">{icons.wallapop}</IconButton>
        <AvatarButton aria-label="Perfil">{icons.avatar}</AvatarButton>
        <IconButton aria-label="Menú">{icons.dots}</IconButton>
      </Toolbar>

      <Bookmarks>
        {bookmarks.map(([icon, name], i) => (
          <Bookmark key={i} href="#" $long={name.endsWith("...")}><BookmarkIcon>{icons[icon]}</BookmarkIcon>{name}</Bookmark>
        ))}
        <More>»</More>
      </Bookmarks>

      <Page>
        <Content>
          <Header>
            <Brand href="#">
              <Svg w={43} h={37}><Bee /></Svg>
              <BrandText><BrandName>MIT</BrandName>APP INVENTOR</BrandText>
            </Brand>
            <Menu>
              {["My Projects", "Connect", "Build", "Settings", "Help"].map(m => <MenuItem key={m}>{m}</MenuItem>)}
            </Menu>
            <Menu $right>
              {["My Projects", "View Trash", "Gallery", "Guide", "Report an Issue"].map(m => <a key={m} href="#">{m}</a>)}
              <MenuItem>English</MenuItem>
              <MenuItem>alberto.vicentechacon@gmail.com</MenuItem>
            </Menu>
          </Header>

          <ProjectBar>
            <ProjectName>LED_RGB</ProjectName>
            <Btn $small>Screen2<Caret /></Btn>
            <Btn $small>Add Screen ...</Btn>
            <Btn $small>Remove Screen</Btn>
            <Spacer />
            <Btn $small disabled>Designer</Btn>
            <Btn $small>Blocks</Btn>
          </ProjectBar>

          <Workspace>
            <Panel>
              <PanelTitle>Palette</PanelTitle>
              <PaletteBody>
                <TextField $h={20} aria-label="Search components" defaultValue="blu" />
                <Results>
                  <PaletteEntry icon="bluetooth" name="BluetoothClient" selected wide />
                  <PaletteEntry icon="bluetooth" name="BluetoothServer" wide />
                </Results>
                <Category>User Interface</Category>
                <CategoryItems>
                  {palette.map(([icon, name]) => <PaletteEntry key={name} icon={icon} name={name} />)}
                </CategoryItems>
                {["Layout", "Media", "Drawing and Animation", "Maps", "Sensors"].map(c => <Category key={c}>{c}</Category>)}
              </PaletteBody>
            </Panel>

            <Panel>
              <PanelTitle>Viewer</PanelTitle>
              <Stage>
                <HiddenRow><Check />Display hidden components in Viewer</HiddenRow>
                <Phone>
                  <Case><PhoneCase /></Case>
                  <Display>
                    <StatusBar><StatusIcons />9:48</StatusBar>
                    <ScreenTitle>Screen2</ScreenTitle>
                    <ScreenBody>
                      <Canvas>
                        {colors.map((row, i) => (
                          <Arrangement key={i}>
                            {row.map(([name, c]) => <Swatch key={name} $c={c} aria-label={name} />)}
                          </Arrangement>
                        ))}
                        <HomeButton>Home</HomeButton>
                      </Canvas>
                    </ScreenBody>
                    <NavBar>
                      <Svg><path d="M15 .8v14.400L1.500 8z" fill="none" stroke="#eee" strokeWidth="1.500" /></Svg>
                      <Svg><circle cx="8" cy="8" r="7" fill="none" stroke="#eee" strokeWidth="1.500" /></Svg>
                      <Svg><path d="M1 1h14v14H1z" fill="none" stroke="#eee" strokeWidth="1.600" /></Svg>
                    </NavBar>
                  </Display>
                </Phone>
                <NonVisible>
                  <NonVisibleTitle>Non-visible components</NonVisibleTitle>
                  {icons.bluetooth}
                  <span>BluetoothClient1</span>
                </NonVisible>
              </Stage>
            </Panel>

            <Column>
              <Panel>
                <PanelTitle>Components</PanelTitle>
                <Tree>
                  {tree.map(([level, icon, name]) => (
                    <Node key={name} $level={level}>
                      {level < 2 && <Toggle aria-label={`Collapse ${name}`} />}
                      <NodeLabel $selected={name === "Home"}>{icons[icon]}<NodeText>{name}</NodeText></NodeLabel>
                    </Node>
                  ))}
                  <Node $level={1} $leaf>
                    <NodeLabel>{icons.bluetooth}<NodeText>BluetoothClient1</NodeText></NodeLabel>
                  </Node>
                </Tree>
                <HScroll><Tri $dir="left" $c="#a3a3a3" /><HThumb /><Tri $dir="right" /></HScroll>
                <Actions><Btn>Rename</Btn><Btn>Delete</Btn></Actions>
              </Panel>
              <Panel>
                <PanelTitle>Media</PanelTitle>
                <MediaBody>
                  <MediaItem href="#">{icons.picture}<MediaName>logo11.png</MediaName></MediaItem>
                  <MediaActions><Btn>Upload File ...</Btn></MediaActions>
                </MediaBody>
              </Panel>
            </Column>

            <Panel>
              <PanelTitle>Properties</PanelTitle>
              <Selected>Home</Selected>
              <Props>
                {properties.map(([name, kind, value]) => <Property key={name} name={name} kind={kind} value={value} />)}
              </Props>
            </Panel>
          </Workspace>
        </Content>
        <VScroll><Tri $dir="up" /><VTrack><VThumb /></VTrack><Tri $dir="down" /></VScroll>
      </Page>

      <Taskbar>
        {["windows", "search", "cortana", "taskview"].map(n => <Task key={n} $sys aria-label={n}>{icons[n]}</Task>)}
        <Tasks>
          {["chrome", "explorer", "store", "onedrive", "word", "autocad", "whatsapp", "spotify", "live", "discord", "arduino"].map(n => (
            <Task key={n} aria-label={n} $active={n === "chrome"} $open={["word", "discord", "arduino"].includes(n)}>{icons[n]}</Task>
          ))}
        </Tasks>
        <Tray>
          {icons.chevron}{icons.network}{icons.speaker}
          <Clock>11:54</Clock>
          {icons.note}
          <Peek />
        </Tray>
      </Taskbar>
    </Shell>
  );
}
